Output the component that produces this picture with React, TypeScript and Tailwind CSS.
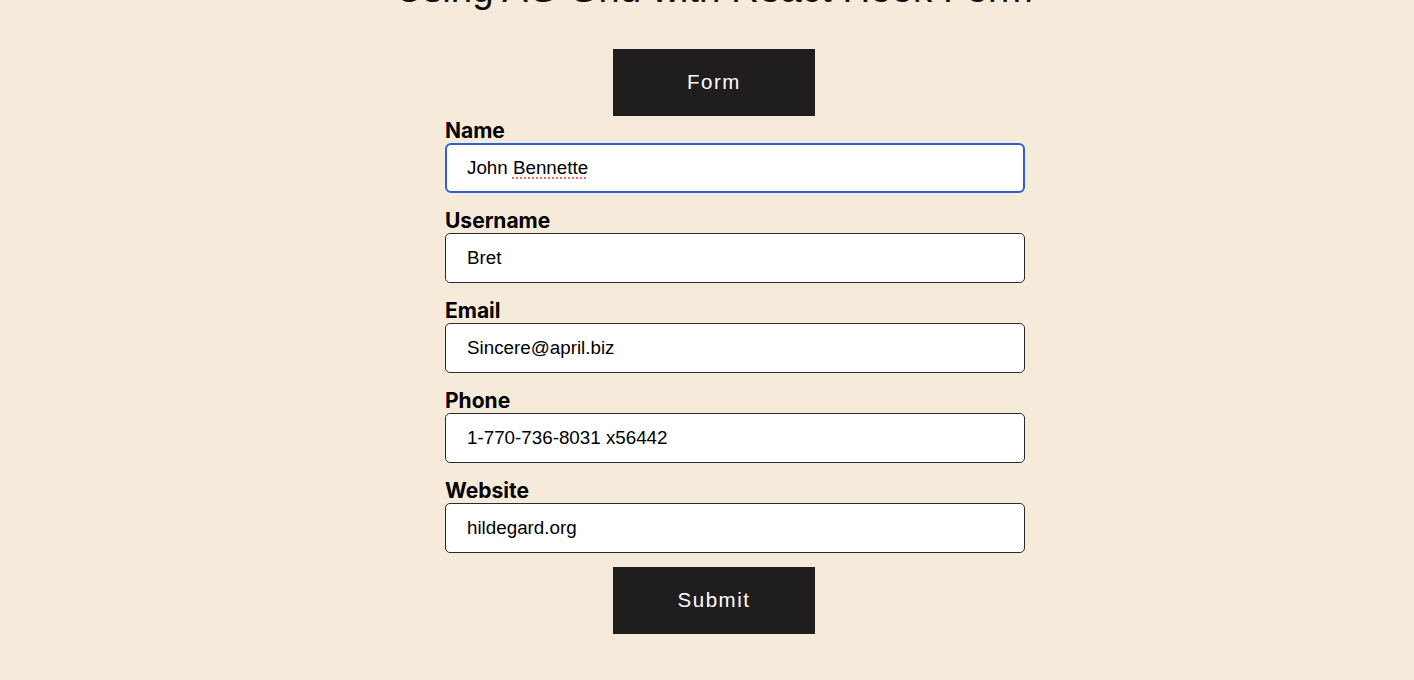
import React from "react"

const fields = [
  { label: "Username", value: "Bret" },
  { label: "Email", value: "Sincere@april.biz" },
  { label: "Phone", value: "1-770-736-8031 x56442" },
  { label: "Website", value: "hildegard.org" },
]

const labelCls =
  "block h-[24px] text-[21px] leading-[24px] font-bold text-black font-['Inter',sans-serif]"
const inputCls =
  "w-[580px] h-[50px] rounded-[5px] border border-[#2a2a2a] bg-white px-[21px] text-[18.8px] text-black font-['Liberation_Sans',Arial,sans-serif] outline-none"

export default function App() {
  return (
    <div className="min-h-screen bg-[#f6ebda] flex flex-col items-center overflow-hidden pl-[14px]">
      <h1 className="mt-[-33px] h-[44px] text-[38.5px] leading-[44px] text-[#111] whitespace-nowrap font-['Liberation_Sans',Arial,sans-serif]">
        Using AG Grid with React Hook Form
      </h1>
      <div className="mt-[38px] w-[202px] h-[67px] bg-[#1f1d1e] flex items-center justify-center text-white text-[20.5px] tracking-[1.5px] font-['Liberation_Sans',Arial,sans-serif]">
        Form
      </div>
      <form className="mt-[3px] ml-[42px] flex flex-col items-start gap-[16px]">
        <div>
          <label className={labelCls}>Name</label>
          <div className="w-[580px] h-[50px] rounded-[6px] border-2 border-[#2b62cf] bg-white px-[20px] flex items-center text-[18.8px] text-black font-['Liberation_Sans',Arial,sans-serif]">
            <span>
              John{" "}
              <span className="underline decoration-dotted decoration-[#e46a6a] decoration-2 underline-offset-[4px]">
                Bennette
              </span>
            </span>
          </div>
        </div>
        {fields.map((f) => (
          <div key={f.label}>
            <label className={labelCls}>{f.label}</label>
            <input className={inputCls} defaultValue={f.value} spellCheck={false} />
          </div>
        ))}
      </form>
      <button className="mt-[14px] w-[202px] h-[67px] bg-[#1f1d1e] text-white text-[20.5px] tracking-[1.5px] font-['Liberation_Sans',Arial,sans-serif]">
        Submit
      </button>
    </div>
  )
}
